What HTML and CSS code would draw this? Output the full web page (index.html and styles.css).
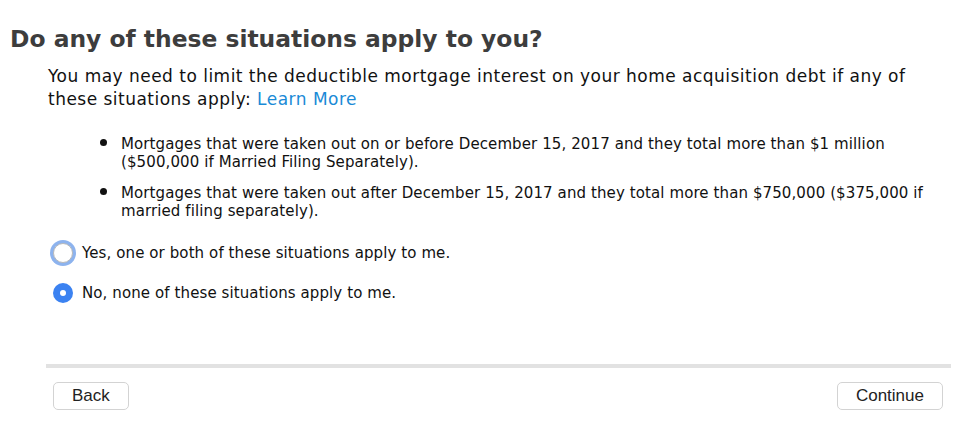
FILE: index.html
```html
<!DOCTYPE html>
<html lang="en">
<head>
  <meta charset="UTF-8">
  <title>Mortgage interest limits</title>
  <link rel="stylesheet" href="styles.css">
</head>
<body>

  <div class="page">
    <h1>Do any of these situations apply to you?</h1>

    <div class="content">
      <p class="intro">You may need to limit the deductible mortgage interest on your home acquisition debt if any of these situations apply: <a href="#">Learn More</a></p>

      <ul class="situations">
        <li>Mortgages that were taken out on or before December 15, 2017 and they total more than $1 million ($500,000 if Married Filing Separately).</li>
        <li>Mortgages that were taken out after December 15, 2017 and they total more than $750,000 ($375,000 if married filing separately).</li>
      </ul>

      <label class="choice">
        <span class="radio focused"></span>
        Yes, one or both of these situations apply to me.
      </label>
      <label class="choice">
        <span class="radio checked"></span>
        No, none of these situations apply to me.
      </label>
    </div>

    <div class="footer">
      <button class="btn">Back</button>
      <button class="btn">Continue</button>
    </div>
  </div>

</body>
</html>
```

FILE: styles.css
```css
body {
  margin: 0;
  background: #fff;
  font-family: "DejaVu Sans", Verdana, sans-serif;
  color: #111;
}

.page {
  padding: 22px 23px 0 10px;
}

h1 {
  margin: 0;
  font-size: 23.4px;
  font-weight: bold;
  color: #3d3d3d;
  line-height: 34px;
}

.content {
  padding-left: 38px;
}

.intro {
  margin: 9px 0 0;
  font-size: 17px;
  letter-spacing: 0.48px;
  line-height: 23px;
  max-width: 875px;
}

.intro a {
  color: #1a8ad6;
  text-decoration: none;
}

.situations {
  list-style: none;
  margin: 24px 0 0;
  padding: 0 0 0 73px;
  font-size: 15px;
  letter-spacing: 0.1px;
  line-height: 18px;
  max-width: 810px;
}

.situations li {
  position: relative;
  margin-bottom: 13px;
}

.situations li::before {
  content: "";
  position: absolute;
  left: -21px;
  top: 4px;
  width: 7px;
  height: 7px;
  border-radius: 50%;
  background: #111;
}

.choice {
  display: flex;
  align-items: center;
  gap: 9px;
  height: 40px;
  font-size: 15px;
  letter-spacing: 0.1px;
  margin-left: 1px;
}

.situations + .choice {
  margin-top: 5px;
}

.radio {
  box-sizing: border-box;
  width: 20px;
  height: 20px;
  border-radius: 50%;
  flex-shrink: 0;
  margin-left: 4px;
}

.radio.focused {
  border: 1px solid #b9b9b9;
  background: #fff;
  box-shadow: 0 0 0 3px #8db3ee;
}

.radio.checked {
  background: #3b82f1;
  position: relative;
}

.radio.checked::after {
  content: "";
  position: absolute;
  left: 7px;
  top: 7px;
  width: 6px;
  height: 6px;
  border-radius: 50%;
  background: #fff;
}

.footer {
  margin: 51px 0 0 36px;
  border-top: 4px solid #e2e2e2;
  padding: 14px 8px 0 7px;
  display: flex;
  justify-content: space-between;
}

.btn {
  font-family: "Liberation Sans", Arial, sans-serif;
  font-size: 17px;
  color: #222;
  background: #fff;
  border: 1px solid #d3d3d3;
  border-radius: 5px;
  height: 28px;
  padding: 0 18px;
}
```
